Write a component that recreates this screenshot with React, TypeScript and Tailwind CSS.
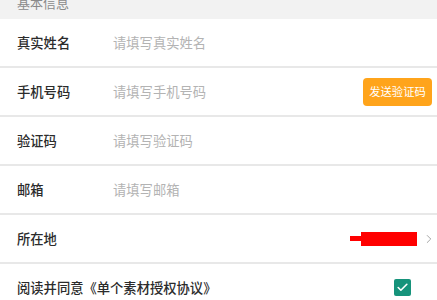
import { ChevronRight, Check } from 'lucide-react';

const font = { fontFamily: '"Noto Sans CJK SC", "Noto Sans", sans-serif' };

interface RowProps {
  label: string;
  placeholder?: string;
  children?: React.ReactNode;
}

function Row({ label, placeholder, children }: RowProps) {
  return (
    <div className="flex h-[47px] items-center bg-white pl-[17px] pr-[5px] border-b-2 border-[#e8e8e8] box-content">
      <span className="w-[96px] shrink-0 text-[13.3px] font-medium text-[#2b2b2b]">{label}</span>
      {placeholder && <span className="flex-1 text-[13.3px] text-[#b3b3b3]">{placeholder}</span>}
      {!placeholder && <div className="flex-1" />}
      {children}
    </div>
  );
}

export default function App() {
  return (
    <div className="w-[437px] h-[300px] overflow-hidden bg-[#f2f2f2]" style={font}>
      {/* 标题 */}
      <div className="h-[19px] relative overflow-hidden pl-[17px]">
        <span className="block text-[13px] leading-[13px] text-[#8a8a8a] -mt-[4px]">基本信息</span>
      </div>

      <Row label="真实姓名" placeholder="请填写真实姓名" />
      <Row label="手机号码" placeholder="请填写手机号码">
        <button className="h-[28px] w-[69px] rounded-[4px] bg-[#ffa41b] text-white text-[11.3px]">发送验证码</button>
      </Row>
      <Row label="验证码" placeholder="请填写验证码" />
      <Row label="邮箱" placeholder="请填写邮箱" />
      <Row label="所在地">
        <div className="flex items-center pr-[-4px] -mr-[4px]">
          <div className="w-[11px] h-[5px] bg-[#ff0000]" />
          <div className="w-[56px] h-[14px] bg-[#ff0000]" />
          <ChevronRight size={14} className="ml-[5px] text-[#999]" strokeWidth={1.5} />
        </div>
      </Row>
      <div className="flex h-[47px] items-center bg-white pl-[17px] pr-[26px]">
        <span className="flex-1 text-[13.3px] font-medium text-[#2b2b2b]">阅读并同意《单个素材授权协议》</span>
        <div className="w-[17px] h-[17px] rounded-[2px] bg-[#16937b] flex items-center justify-center">
          <Check size={13} strokeWidth={3} className="text-white" />
        </div>
      </div>
    </div>
  );
}
